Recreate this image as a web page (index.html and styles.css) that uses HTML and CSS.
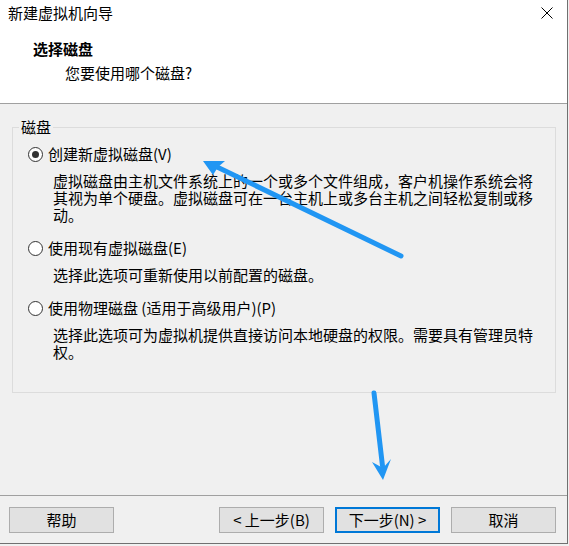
FILE: index.html
```html
<!DOCTYPE html>
<html lang="zh-CN">
<head>
<meta charset="utf-8">
<title>新建虚拟机向导</title>
<link rel="stylesheet" href="styles.css">
</head>
<body>
<div class="window">
  <div class="titlebar">
    <span class="title">新建虚拟机向导</span>
    <span class="close">
      <svg width="12" height="12" viewBox="0 0 12 12"><path d="M0.5 0.5 L11.5 11.5 M11.5 0.5 L0.5 11.5" stroke="#000" stroke-width="1" fill="none"/></svg>
    </span>
  </div>
  <div class="header">
    <div class="h1">选择磁盘</div>
    <div class="sub">您要使用哪个磁盘?</div>
  </div>
  <div class="main">
    <fieldset class="group">
      <legend>磁盘</legend>
      <div class="options">
        <div class="option">
          <div class="opt-row"><span class="radio checked"></span><span>创建新虚拟磁盘(V)</span></div>
          <div class="desc">虚拟磁盘由主机文件系统上的一个或多个文件组成，客户机操作系统会将其视为单个硬盘。虚拟磁盘可在一台主机上或多台主机之间轻松复制或移动。</div>
        </div>
        <div class="option">
          <div class="opt-row"><span class="radio"></span><span>使用现有虚拟磁盘(E)</span></div>
          <div class="desc">选择此选项可重新使用以前配置的磁盘。</div>
        </div>
        <div class="option">
          <div class="opt-row"><span class="radio"></span><span>使用物理磁盘 (适用于高级用户)(P)</span></div>
          <div class="desc">选择此选项可为虚拟机提供直接访问本地硬盘的权限。需要具有管理员特权。</div>
        </div>
      </div>
    </fieldset>
  </div>
  <div class="footer">
    <button class="btn">帮助</button>
    <div class="spacer"></div>
    <button class="btn">&lt; 上一步(B)</button>
    <button class="btn default">下一步(N) &gt;</button>
    <button class="btn">取消</button>
  </div>
  <svg class="annot" width="569" height="546" viewBox="0 0 569 546">
    <line x1="401" y1="256" x2="215" y2="166" stroke="#2196f3" stroke-width="5" stroke-linecap="round"/>
    <polygon points="203,161 225,161 218,167 213,175" fill="#2196f3"/>
    <line x1="374" y1="393" x2="382.5" y2="466" stroke="#2196f3" stroke-width="5" stroke-linecap="round"/>
    <polygon points="383,480 372,462 383,468 391,459" fill="#2196f3"/>
  </svg>
</div>
</body>
</html>
```

FILE: styles.css
```css
* { box-sizing: border-box; }
html, body {
  margin: 0;
  padding: 0;
  background: #f0f0f0;
}
body {
  width: 569px;
  height: 546px;
  overflow: hidden;
  font-family: "Noto Sans CJK SC", "Microsoft YaHei", sans-serif;
  font-size: 15px;
  color: #000;
}
.window {
  position: relative;
  width: 568px;
  height: 544px;
  border-right: 1px solid #707070;
  border-bottom: 1px solid #707070;
  display: flex;
  flex-direction: column;
  background: #f0f0f0;
}
.titlebar {
  height: 26px;
  background: #fff;
  display: flex;
  align-items: center;
  justify-content: space-between;
  padding: 0 14px 0 8px;
  line-height: 20px;
}
.close {
  display: flex;
}
.header {
  height: 78px;
  background: #fff;
  border-bottom: 1px solid #a0a0a0;
  padding: 13px 0 0 33px;
}
.h1 {
  font-weight: 700;
  line-height: 20px;
}
.sub {
  line-height: 20px;
  margin-top: 4px;
  padding-left: 32px;
}
.main {
  flex: 1;
  padding-top: 13px;
}
.group {
  margin: 0 11px 0 12px;
  border: 1px solid #dcdcdc;
  padding: 7px 0 32px 6px;
  min-width: 0;
}
.group legend {
  padding: 0 2px;
  line-height: 20px;
}
.options {
  padding-left: 9px;
}
.option + .option {
  margin-top: 15px;
}
.opt-row {
  display: flex;
  align-items: center;
  height: 20px;
  gap: 5px;
  line-height: 20px;
}
.radio {
  width: 15px;
  height: 15px;
  border: 1px solid #333;
  border-radius: 50%;
  background: #fff;
  display: flex;
  align-items: center;
  justify-content: center;
  flex: none;
}
.radio.checked::after {
  content: "";
  width: 7px;
  height: 7px;
  border-radius: 50%;
  background: #333;
}
.desc {
  margin: 8px 0 0 25px;
  width: 486px;
  line-height: 17px;
}
.footer {
  height: 48px;
  border-top: 1px solid #a0a0a0;
  padding: 11px 11px 10px 9px;
  display: flex;
  gap: 11px;
}
.spacer { flex: 1; }
.btn {
  width: 105px;
  height: 26px;
  background: #e1e1e1;
  border: 1px solid #adadad;
  font-family: inherit;
  font-size: 15px;
  line-height: 22px;
  color: #000;
  padding: 0;
  margin: 0;
}
.btn.default {
  border: 2px solid #0078d7;
}
.annot {
  position: absolute;
  left: 0;
  top: 0;
  pointer-events: none;
}
```
